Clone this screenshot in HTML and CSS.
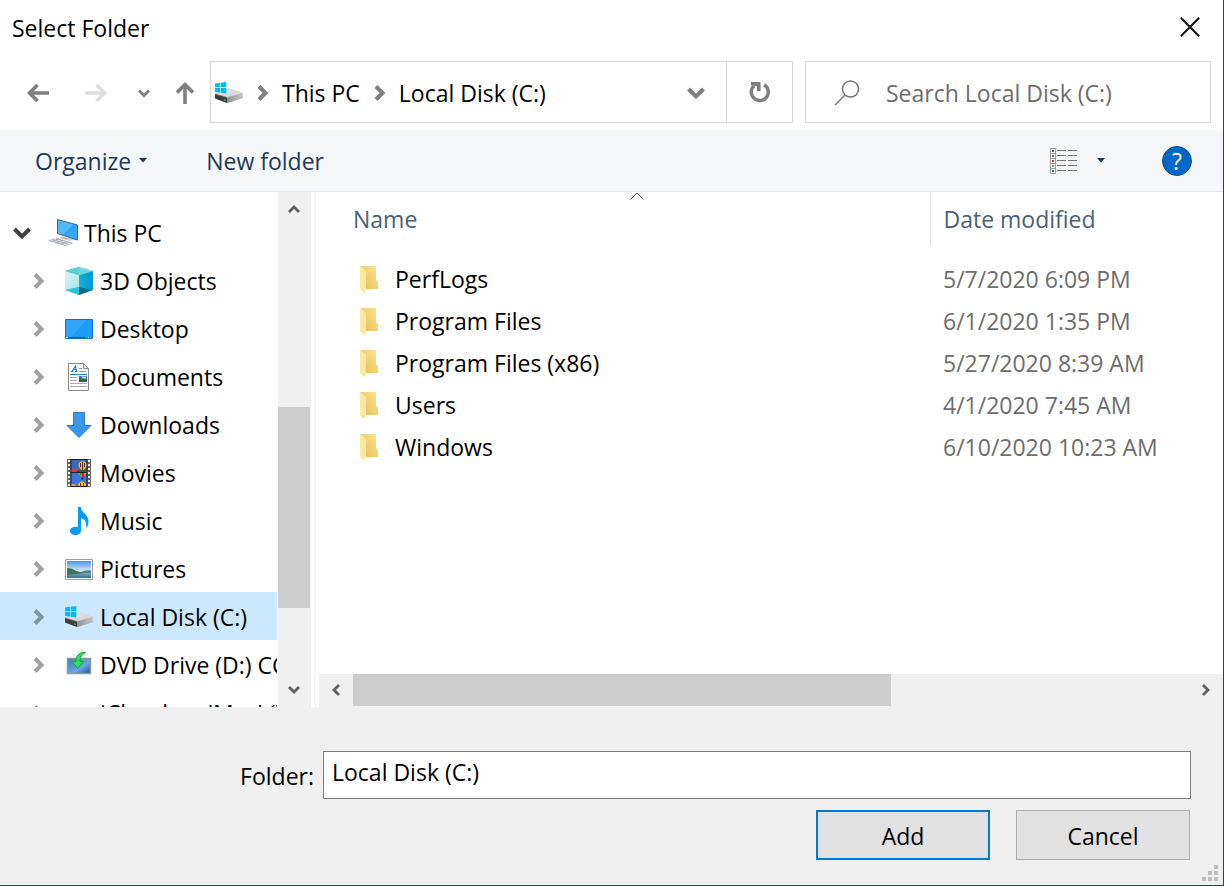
FILE: index.html
```html
<!DOCTYPE html>
<html lang="en">
<head>
    <meta charset="UTF-8">
    <meta name="viewport" content="width=device-width, initial-scale=1.0">
    <title>Select Folder</title>
    <link rel="stylesheet" href="styles.css">
</head>
<body>
    <!-- Shared icons -->
    <svg class="sprite" aria-hidden="true">
        <defs>
            <linearGradient id="folderBack" x1="0" y1="1" x2="1" y2="0">
                <stop offset="0" stop-color="#e6bd54"/>
                <stop offset="1" stop-color="#fee391"/>
            </linearGradient>
            <linearGradient id="driveTop" x1="0" y1="0" x2="1" y2="1">
                <stop offset="0" stop-color="#e9e9eb"/>
                <stop offset="1" stop-color="#cfcfd1"/>
            </linearGradient>
            <linearGradient id="driveSide" x1="0" y1="0" x2="1" y2="0">
                <stop offset="0" stop-color="#8f9093"/>
                <stop offset="1" stop-color="#c4c5c7"/>
            </linearGradient>
            <linearGradient id="screen" x1="0" y1="0" x2="1" y2="1">
                <stop offset="0" stop-color="#4fb4fb"/>
                <stop offset="0.5" stop-color="#55bbff"/>
                <stop offset="0.5" stop-color="#2ea5fb"/>
                <stop offset="1" stop-color="#36a9fb"/>
            </linearGradient>
            <linearGradient id="cubeLeft" x1="0" y1="0" x2="1" y2="1">
                <stop offset="0" stop-color="#d9f4f6"/>
                <stop offset="1" stop-color="#a5e6ea"/>
            </linearGradient>
            <linearGradient id="cubeRight" x1="0" y1="0" x2="1" y2="0">
                <stop offset="0" stop-color="#17b3d9"/>
                <stop offset="1" stop-color="#0097d1"/>
            </linearGradient>
            <linearGradient id="downBlue" x1="0" y1="0" x2="0" y2="1">
                <stop offset="0" stop-color="#3f9ae8"/>
                <stop offset="1" stop-color="#3595ea"/>
            </linearGradient>
            <linearGradient id="sky" x1="0" y1="0" x2="0" y2="1">
                <stop offset="0" stop-color="#4c93e6"/>
                <stop offset="1" stop-color="#e4f3fc"/>
            </linearGradient>
            <linearGradient id="sea" x1="0" y1="0" x2="0" y2="1">
                <stop offset="0" stop-color="#8db7cf"/>
                <stop offset="1" stop-color="#346a94"/>
            </linearGradient>
            <linearGradient id="dvd" x1="0" y1="0" x2="1" y2="1">
                <stop offset="0" stop-color="#3c78c4"/>
                <stop offset="0.6" stop-color="#6ba5e4"/>
                <stop offset="1" stop-color="#1f4f9f"/>
            </linearGradient>
        </defs>
        <symbol id="chevron" viewBox="0 0 12 16">
            <path d="M2 1.5 8.5 8 2 14.5" fill="none" stroke="currentColor" stroke-width="4"/>
        </symbol>
        <symbol id="arrow" viewBox="0 0 24 20">
            <path d="M23 10H4M11.5 2 3.5 10l8 8" fill="none" stroke="currentColor" stroke-width="3.6"/>
        </symbol>
        <symbol id="scroll-arrow" viewBox="0 0 12 10">
            <path d="M1 8 6 3l5 5" fill="none" stroke="currentColor" stroke-width="2.8"/>
        </symbol>
        <symbol id="caret" viewBox="0 0 8 5">
            <path d="M0 0h8L4 4.5z" fill="currentColor"/>
        </symbol>
        <symbol id="drive" viewBox="0 0 28 22">
            <path d="M0 11.5 14 6.5l14 4.5v5L13 21 0 16.5z" fill="#bcbdc0"/>
            <path d="M0 12 14 6.5 28 11 12 15.5z" fill="url(#driveTop)"/>
            <path d="M12 15.5 28 11v5L12 21z" fill="url(#driveSide)"/>
            <path d="M0 12l12 3.5V21L0 16.5z" fill="#3b3c3e"/>
            <path d="M0 12l12 3.5" stroke="#777" stroke-width="0.8"/>
            <path d="M9 17.2l2 .6v1.2l-2-.6z" fill="#31c24a"/>
            <path d="M0 1.500 5 .8v4.400H0zM5.700.7 11.300 0v5.200H5.700zM0 6h5v4.600L0 10zM5.700 6h5.600v5.400l-5.600-.7z" fill="#00bdf6"/>
        </symbol>
        <symbol id="folder" viewBox="0 0 20 28">
            <path d="M1 1h16v14l2 2v7H6z" fill="url(#folderBack)"/>
            <path d="M1 1l6 5v18H6v4L1 24z" fill="#ffe9a2"/>
            <path d="M1 24l5 1.2V28z" fill="#fddf80"/>
        </symbol>
    </svg>

    <div class="dialog">
        <header class="title-bar">
            <h1 class="title">Select Folder</h1>
            <button class="close" type="button" aria-label="Close">
                <svg width="20" height="20" viewBox="0 0 20 20"><path d="M.8.8l18.4 18.4M19.2.8.8 19.2" stroke="#111" stroke-width="2"/></svg>
            </button>
        </header>

        <nav class="nav-bar">
            <button class="nav-button" type="button" aria-label="Back"><svg width="24" height="20"><use href="#arrow"/></svg></button>
            <button class="nav-button disabled" type="button" aria-label="Forward" disabled><svg class="flip" width="24" height="20"><use href="#arrow"/></svg></button>
            <button class="nav-button recent" type="button" aria-label="Recent locations">
                <svg width="12" height="9" viewBox="0 0 12 9"><path d="M1 1.5l5 5 5-5" fill="none" stroke="currentColor" stroke-width="3"/></svg>
            </button>
            <button class="nav-button up" type="button" aria-label="Up">
                <svg width="20" height="24" viewBox="0 0 20 24"><path d="M10 23V4M2 11.5l8-8 8 8" fill="none" stroke="currentColor" stroke-width="3.6"/></svg>
            </button>
            <div class="address">
                <svg class="address-icon" width="28" height="22"><use href="#drive"/></svg>
                <svg class="crumb-arrow" width="12" height="16"><use href="#chevron"/></svg>
                <button class="crumb" type="button">This PC</button>
                <svg class="crumb-arrow" width="12" height="16"><use href="#chevron"/></svg>
                <button class="crumb" type="button">Local Disk (C:)</button>
                <button class="history" type="button" aria-label="Previous locations">
                    <svg width="18" height="13" viewBox="0 0 18 13"><path d="M1.5 2 9 9.5 16.5 2" fill="none" stroke="currentColor" stroke-width="4"/></svg>
                </button>
                <button class="refresh" type="button" aria-label="Refresh">
                    <svg width="22" height="24" viewBox="0 0 22 24"><path d="M15.2 4.8A8.5 8.5 0 1 1 5 5.8" fill="none" stroke="currentColor" stroke-width="3.4"/><path d="M2 2h9.5v9H8V6.5L2 5z" fill="currentColor"/></svg>
                </button>
            </div>
            <label class="search">
                <svg width="26" height="26" viewBox="0 0 26 26"><circle cx="16.5" cy="9" r="8" fill="none" stroke="#777" stroke-width="1.5"/><path d="M11 15 1 25" stroke="#777" stroke-width="1.5"/></svg>
                <input class="search-input" type="search" placeholder="Search Local Disk (C:)" aria-label="Search Local Disk (C:)">
            </label>
        </nav>

        <div class="toolbar">
            <button class="tool" type="button">Organize <svg width="8" height="5"><use href="#caret"/></svg></button>
            <button class="tool" type="button">New folder</button>
            <button class="tool view" type="button" aria-label="Change your view">
                <svg width="28" height="26" viewBox="0 0 28 26">
                    <path d="M.5.5h5v25h-5zM.5 5.5h5M.5 10.5h5M.5 15.5h5M.5 20.5h5" fill="#fff" stroke="#9a9a9a"/>
                    <path d="M2 2h2v2H2z" fill="#2c7a8c"/><path d="M2 7h2v2H2z" fill="#55708f"/><path d="M2 12h2v2H2z" fill="#c8281e"/><path d="M2 17h2v2H2z" fill="#7fae4c"/><path d="M2 22h2v2H2z" fill="#2c7a8c"/>
                    <path d="M7 2.5h9M18 2.5h9M7 7.5h9M18 7.5h9M7 12.5h9M18 12.5h9M7 17.5h9M18 17.5h9M7 22.5h9M18 22.5h9" stroke="#777"/>
                </svg>
                <svg width="8" height="5"><use href="#caret"/></svg>
            </button>
            <button class="help" type="button" aria-label="Help">?</button>
        </div>

        <main class="content">
            <ul class="tree">
                <li class="tree-item root">
                    <svg class="expander open" width="18" height="13" viewBox="0 0 18 13"><path d="M1.5 2 9 9.5 16.5 2" fill="none" stroke="currentColor" stroke-width="4"/></svg>
                    <svg width="30" height="28" viewBox="0 0 30 28">
                        <path d="M16 19l8-1 5 2-8 2z" fill="#c9cdd2"/>
                        <path d="M9.5.5 29.5 6v15L9.500 14.500z" fill="url(#screen)" stroke="#52606d"/>
                        <path d="M14 17.5l6 1.8-2 1.5-6-2z" fill="#aeb4bb"/>
                        <path d="M0 21l8-2.5L26 24l-8 3.5z" fill="#dfe3e8"/>
                        <path d="M1 21.5l17 5M4 20.500l17 5M8 19.500l16 4.800M4 22.500l7-3M8 24l7-3M13 25l7-3" stroke="#98a0a9" stroke-width="0.8"/>
                    </svg>
                    This PC
                </li>
                <li class="tree-item">
                    <svg class="expander" width="12" height="16"><use href="#chevron"/></svg>
                    <svg class="item-icon" width="28" height="28" viewBox="0 0 28 28">
                        <path d="M14 0 28 4v19l-14 5L0 23V4z" fill="#6fd6db"/>
                        <path d="M0 4l14 4v12L0 23z" fill="url(#cubeLeft)"/>
                        <path d="M14 8l14-4v19l-14-3z" fill="url(#cubeRight)"/>
                        <path d="M0 23l14-3v8z" fill="#2fc5d8"/>
                        <path d="M14 20l14 3-14 5z" fill="#016f8b"/>
                        <path d="M14 0 28 4 14 8 0 4z" fill="#6ed5da"/>
                        <path d="M14 0v8L0 4z" fill="#5acbd0"/>
                    </svg>
                    3D Objects
                </li>
                <li class="tree-item">
                    <svg class="expander" width="12" height="16"><use href="#chevron"/></svg>
                    <svg class="item-icon" width="28" height="20" viewBox="0 0 28 20">
                        <path d="M.5.5h27v19H.5z" fill="#1b9bfd" stroke="#1173b9"/>
                        <path d="M1 1h21L6 18H1z" fill="#31a5fd"/>
                        <path d="M1 18h26v1H1z" fill="#0b5c9c"/>
                        <path d="M1 18h2v1H1zM21 18h1v1h-1zM23 18h1v1h-1zM25 18h1v1h-1z" fill="#fff"/>
                    </svg>
                    Desktop
                </li>
                <li class="tree-item">
                    <svg class="expander" width="12" height="16"><use href="#chevron"/></svg>
                    <svg class="item-icon" width="28" height="28" viewBox="0 0 28 28">
                        <path d="M3.5.5h15l5 5v22h-20z" fill="#fdfdfd" stroke="#8b8b8b"/>
                        <path d="M18.5.5v5h5z" fill="#e3e3e3" stroke="#8b8b8b"/>
                        <path d="M6 8.5h2.5M10 8.5h2.5M7 8.5 10.5 3l1 5.5M8.5 6.5h3" fill="none" stroke="#1683c8" stroke-width="1.2"/>
                        <path d="M14 5.5h3M14 8.5h7" stroke="#55a9dc"/>
                        <path d="M5 11.5h17" stroke="#1683c8"/>
                        <path d="M5 14.5h7M5 17.5h7M5 20.5h17M5 23.5h17" stroke="#aaa"/>
                        <path d="M14 13h8v6h-8z" fill="#3f7fae"/>
                        <path d="M14 16l4-1 4 1v3h-8z" fill="#36604c"/>
                        <path d="M17 13.5h4v2h-4z" fill="#b9d9ef"/>
                    </svg>
                    Documents
                </li>
                <li class="tree-item">
                    <svg class="expander" width="12" height="16"><use href="#chevron"/></svg>
                    <svg class="item-icon" width="28" height="28" viewBox="0 0 28 28">
                        <path d="M8.5 1.5h11v13H26L14 26.5 2 14.5h6.500z" fill="url(#downBlue)" stroke="#2b7cc6"/>
                    </svg>
                    Downloads
                </li>
                <li class="tree-item">
                    <svg class="expander" width="12" height="16"><use href="#chevron"/></svg>
                    <svg class="item-icon" width="28" height="28" viewBox="0 0 28 28">
                        <path d="M2 0h24v28H2z" fill="#666"/>
                        <path d="M4 1v27M24 1v27" stroke="#f0f0f0" stroke-width="2" stroke-dasharray="2 2"/>
                        <path d="M5.5 0h17v28h-17z" fill="#1d1d22"/>
                        <path d="M6.5 1h15v12h-15z" fill="#3d68c4"/>
                        <path d="M6.5 14h15v13h-15z" fill="#3a76dd"/>
                        <path d="M6.5 10l3-1 3 2 4-1v3h-10z" fill="#d43e43"/>
                        <path d="M12 11h10v2H12z" fill="#23642e"/>
                        <path d="M13.500 6c0-5 8-5 8 0 0 2-2 4-3 5h-2c-1-1-3-3-3-5z" fill="#f2c321"/>
                        <path d="M15.500 4v4M19.500 4v4M17.500 3v8" stroke="#5c2a1b"/>
                        <path d="M13 14h8.500l-3 4h-2.500z" fill="#e8832b"/>
                        <path d="M14.500 14h2v3h-1z" fill="#3c9a46"/>
                        <path d="M17 14h2v4h-2z" fill="#c52a2a"/>
                        <path d="M16.500 18.500h2v2h-2z" fill="#2b1e18"/>
                        <path d="M13 27c0-6 8-6 8 0z" fill="#f2c321"/>
                        <path d="M15.500 24v3M18.500 24v3" stroke="#9b251f"/>
                        <path d="M6.5 25h3l2 2h-5z" fill="#e5a035"/>
                    </svg>
                    Movies
                </li>
                <li class="tree-item">
                    <svg class="expander" width="12" height="16"><use href="#chevron"/></svg>
                    <svg class="item-icon" width="28" height="28" viewBox="0 0 28 28">
                        <path d="M13 0h3c0 6 7.5 7 7.5 14.5 0 2.500-.8 5-2.500 7 1-6-1-9.500-5-10.500v12.500c0 3-2.500 4.500-5.500 4.500S5 26.500 5 24c0-3 4-5 8-4z" fill="#0a9cf5"/>
                    </svg>
                    Music
                </li>
                <li class="tree-item">
                    <svg class="expander" width="12" height="16"><use href="#chevron"/></svg>
                    <svg class="item-icon" width="28" height="21" viewBox="0 0 28 21">
                        <path d="M.5.5h27v20H.5z" fill="#fff" stroke="#9d9d9d"/>
                        <path d="M2 2h24v11H2z" fill="url(#sky)"/>
                        <path d="M2 13h24v6H2z" fill="url(#sea)"/>
                        <path d="M2 9c4 0 6 1 9 3l9 2L2 16z" fill="#3f7162"/>
                        <path d="M16 13c3-1.500 7-2 10-1.500V14H16z" fill="#56867d"/>
                    </svg>
                    Pictures
                </li>
                <li class="tree-item selected">
                    <svg class="expander" width="12" height="16"><use href="#chevron"/></svg>
                    <svg class="item-icon" width="28" height="22"><use href="#drive"/></svg>
                    Local Disk (C:)
                </li>
                <li class="tree-item">
                    <svg class="expander" width="12" height="16"><use href="#chevron"/></svg>
                    <svg class="item-icon" width="28" height="28" viewBox="0 0 28 28">
                        <path d="M2.500 7.500h23v15h-23z" fill="url(#dvd)" stroke="#8b98a0" stroke-width="1.5"/>
                        <path d="M20.500 1.500c-6-1-9.500 3-9.500 9H7L12.500 17.500 18.500 10.500H15c0-4 1.500-7 5.500-9z" fill="#2de058" stroke="#14a338"/>
                    </svg>
                    DVD Drive (D:) CCCOMA_X64
                </li>
                <li class="tree-item">
                    <svg class="expander" width="12" height="16"><use href="#chevron"/></svg>
                    <span class="item-icon"></span>
                    iCloud on 'Mac' (Z:)
                </li>
            </ul>

            <div class="scrollbar vertical">
                <button class="scroll-button" type="button" aria-label="Scroll up"><svg width="12" height="10"><use href="#scroll-arrow"/></svg></button>
                <div class="track"><div class="thumb"></div></div>
                <button class="scroll-button" type="button" aria-label="Scroll down"><svg class="down" width="12" height="10"><use href="#scroll-arrow"/></svg></button>
            </div>

            <section class="files">
                <table class="file-table">
                    <thead>
                        <tr>
                            <th class="name">Name
                                <svg class="sort" width="14" height="8" viewBox="0 0 14 8"><path d="M.5 7.5 7 1l6.5 6.5" fill="none" stroke="#555"/></svg>
                            </th>
                            <th class="date">Date modified</th>
                        </tr>
                    </thead>
                    <tbody>
                        <tr>
                            <td class="name"><div class="file"><svg width="20" height="28"><use href="#folder"/></svg>PerfLogs</div></td>
                            <td class="date">5/7/2020 6:09 PM</td>
                        </tr>
                        <tr>
                            <td class="name"><div class="file"><svg width="20" height="28"><use href="#folder"/></svg>Program Files</div></td>
                            <td class="date">6/1/2020 1:35 PM</td>
                        </tr>
                        <tr>
                            <td class="name"><div class="file"><svg width="20" height="28"><use href="#folder"/></svg>Program Files (x86)</div></td>
                            <td class="date">5/27/2020 8:39 AM</td>
                        </tr>
                        <tr>
                            <td class="name"><div class="file"><svg width="20" height="28"><use href="#folder"/></svg>Users</div></td>
                            <td class="date">4/1/2020 7:45 AM</td>
                        </tr>
                        <tr>
                            <td class="name"><div class="file"><svg width="20" height="28"><use href="#folder"/></svg>Windows</div></td>
                            <td class="date">6/10/2020 10:23 AM</td>
                        </tr>
                    </tbody>
                </table>
                <div class="scrollbar horizontal">
                    <button class="scroll-button" type="button" aria-label="Scroll left"><svg class="left" width="12" height="10"><use href="#scroll-arrow"/></svg></button>
                    <div class="track"><div class="thumb"></div></div>
                    <button class="scroll-button" type="button" aria-label="Scroll right"><svg class="right" width="12" height="10"><use href="#scroll-arrow"/></svg></button>
                </div>
            </section>
        </main>

        <footer class="footer">
            <div class="folder-row">
                <label class="folder-label" for="folder">Folder:</label>
                <input class="folder-input" id="folder" type="text" value="Local Disk (C:)">
            </div>
            <div class="actions">
                <button class="button primary" type="button">Add</button>
                <button class="button" type="button">Cancel</button>
            </div>
            <svg class="grip" width="16" height="16" viewBox="0 0 16 16"><path d="M12 0h4v4h-4zM6 6h4v4H6zM12 6h4v4h-4zM0 12h4v4H0zM6 12h4v4H6zM12 12h4v4h-4z" fill="#bfbfbf"/></svg>
        </footer>
    </div>
</body>
</html>
```
FILE: styles.css
```css
* {
    box-sizing: border-box;
}

body {
    margin: 0;
    font-family: 'Segoe UI', 'Open Sans', 'Noto Sans', sans-serif;
    font-size: 23px;
    line-height: 32px;
    color: #000;
    background-color: #fff;
}

button,
input {
    font: inherit;
    color: inherit;
    margin: 0;
    padding: 0;
    border: none;
    background: none;
}

svg {
    display: block;
    flex: none;
}

.sprite {
    position: absolute;
    width: 0;
    height: 0;
}

.dialog {
    display: flex;
    flex-direction: column;
    height: 100vh;
    border-right: 1px solid #1b4a5c;
    border-bottom: 1px solid #1b4a5c;
}

/* Title bar */
.title-bar {
    display: flex;
    justify-content: space-between;
    height: 61px;
    padding: 12px 12px 0;
}

.title {
    margin: 0;
    font-size: inherit;
    font-weight: normal;
}

.close {
    display: flex;
    align-items: center;
    justify-content: center;
    width: 42px;
    height: 30px;
}

/* Navigation */
.nav-bar {
    display: flex;
    height: 69px;
    padding: 0 12px 7px 9px;
}

.nav-button {
    display: flex;
    align-items: center;
    justify-content: center;
    width: 58px;
    padding-top: 2px;
    color: #7f7f7f;
}

.nav-button.disabled {
    color: #dedede;
}

.nav-button.recent {
    width: 38px;
}

.nav-button.up {
    width: 44px;
    margin-right: 3px;
}

.flip {
    transform: scaleX(-1);
}

.address {
    display: flex;
    flex: 1;
    align-items: center;
    padding-top: 2px;
    border: 1px solid #d9d9d9;
}

.address-icon {
    margin: 0 14px 0 4px;
}

.crumb-arrow {
    margin-right: 13px;
    color: #7f7f7f;
}

.crumb {
    margin-right: 14px;
}

.history {
    display: flex;
    align-items: center;
    justify-content: center;
    align-self: stretch;
    width: 60px;
    margin-left: auto;
    color: #7f7f7f;
}

.refresh {
    display: flex;
    align-items: center;
    justify-content: center;
    align-self: stretch;
    width: 66px;
    margin-top: -2px;
    border-left: 1px solid #d9d9d9;
    color: #7f7f7f;
}

.search {
    display: flex;
    align-items: center;
    gap: 26px;
    width: 406px;
    margin-left: 12px;
    padding: 2px 12px 0 28px;
    border: 1px solid #d9d9d9;
}

.search-input {
    flex: 1;
    min-width: 0;
    outline: none;
}

.search-input::placeholder {
    color: #6d6d6d;
    opacity: 1;
}

/* Toolbar */
.toolbar {
    display: flex;
    align-items: center;
    height: 62px;
    padding: 0 31px 0 35px;
    border-bottom: 1px solid #e5e7e9;
    background-color: #f4f6f8;
}

.tool {
    display: flex;
    align-items: center;
    gap: 8px;
    margin-right: 59px;
    color: #1e395b;
}

.tool.view {
    gap: 19px;
    margin: 0 57px 0 auto;
}

.help {
    width: 30px;
    height: 30px;
    border: 1px solid #174b7e;
    border-radius: 50%;
    line-height: 28px;
    color: #fff;
    background-color: #0068c8;
}

/* Folder tree */
.content {
    display: flex;
    flex: 1;
    min-height: 0;
}

.tree {
    width: 277px;
    margin: 0 1px 0 0;
    padding: 16px 0 0;
    overflow: hidden;
    list-style: none;
}

.tree-item {
    display: flex;
    align-items: center;
    height: 48px;
    padding: 2px 0 0 33px;
    white-space: nowrap;
}

.tree-item.root {
    gap: 6px;
    padding-left: 13px;
}

.tree-item.selected {
    background-color: #cce8ff;
}

.expander {
    color: #a3a3a3;
}

.expander.open {
    margin-right: 11px;
    color: #404040;
}

.selected .expander {
    color: #8297a6;
}

.item-icon {
    flex: none;
    width: 28px;
    margin: 0 7px 0 20px;
}

/* Scrollbars */
.scrollbar {
    display: flex;
    background-color: #f0f0f0;
}

.scrollbar.vertical {
    flex-direction: column;
    width: 33px;
}

.scroll-button {
    display: flex;
    align-items: center;
    justify-content: center;
    width: 32px;
    height: 34px;
    color: #606060;
}

.horizontal .scroll-button {
    width: 34px;
    height: 32px;
}

.track {
    flex: 1;
}

.thumb {
    background-color: #cdcdcd;
}

.vertical .thumb {
    width: 32px;
    height: 45%;
    margin-top: 181px;
}

.horizontal {
    height: 33px;
}

.horizontal .thumb {
    width: 64.4%;
    height: 32px;
}

.down {
    transform: rotate(180deg);
}

.left {
    transform: rotate(-90deg);
}

.right {
    transform: rotate(90deg);
}

/* File list */
.files {
    display: flex;
    flex: 1;
    flex-direction: column;
    justify-content: space-between;
    margin-left: 3px;
    padding-left: 3px;
    border-left: 2px solid #f5f5f5;
}

.file-table {
    width: 100%;
    border-collapse: collapse;
}

.file-table th {
    position: relative;
    height: 52px;
    padding: 2px 0 0;
    font-weight: normal;
    text-align: left;
    color: #4c607a;
}

.file-table th.name {
    padding-left: 34px;
}

.file-table th.date {
    width: 293px;
    padding-left: 13px;
    border-left: 1px solid #e5e5e5;
}

.sort {
    position: absolute;
    top: 0;
    left: 51%;
}

.file-table tbody::before {
    content: '';
    display: block;
    height: 14px;
}

.file-table td {
    height: 42px;
    padding: 0;
}

.file-table td.date {
    padding-left: 13px;
    color: #6d6d6d;
}

.file {
    display: flex;
    align-items: center;
    gap: 16px;
    padding-left: 40px;
}

/* Footer */
.footer {
    position: relative;
    padding: 44px 32px 25px;
    background-color: #f0f0f0;
}

.folder-row {
    display: flex;
    align-items: center;
    gap: 9px;
}

.folder-label {
    width: 282px;
    padding-top: 2px;
    text-align: right;
}

.folder-input {
    flex: 1;
    height: 48px;
    padding: 0 8px 6px;
    border: 1px solid #7a7a7a;
    background-color: #fff;
}

.actions {
    display: flex;
    justify-content: flex-end;
    gap: 26px;
    margin-top: 11px;
    padding-right: 1px;
}

.button {
    width: 174px;
    height: 50px;
    padding-top: 2px;
    border: 1px solid #adadad;
    background-color: #e1e1e1;
}

.button.primary {
    border: 2px solid #0078d7;
}

.grip {
    position: absolute;
    right: 5px;
    bottom: 4px;
}
```
